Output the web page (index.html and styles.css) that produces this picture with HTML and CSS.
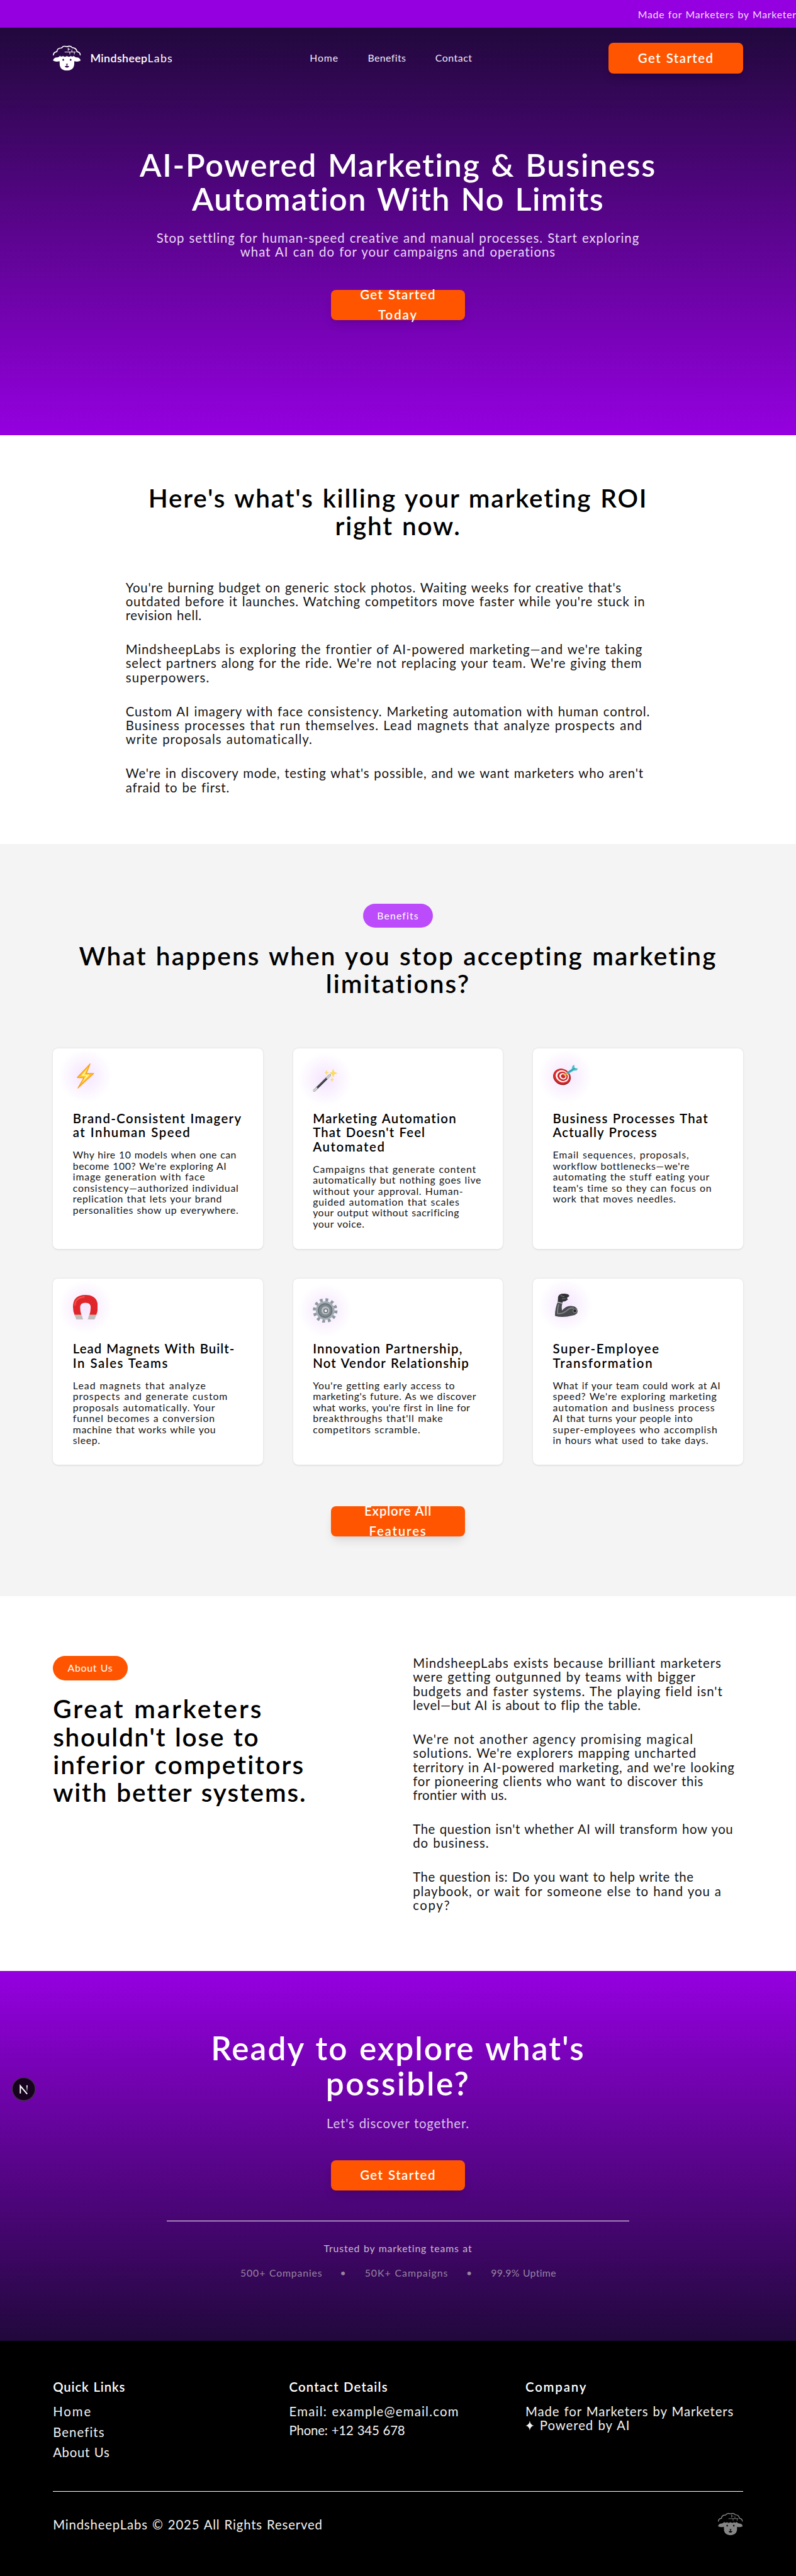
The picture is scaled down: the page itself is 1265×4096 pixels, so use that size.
FILE: index.html
```
<!DOCTYPE html>
<html lang="en">
<head>
<meta charset="utf-8">
<title>MindsheepLabs</title>
<link rel="stylesheet" href="styles.css">
</head>
<body>
<svg class="defs" width="0" height="0" aria-hidden="true">
  <symbol id="sheep" viewBox="0 0 135 124">
    <g fill="none" stroke="currentColor" stroke-width="5" stroke-linecap="round" stroke-linejoin="round">
      <path d="M2 47Q3 33 19 31Q20 13 42 13Q50 0 68 7Q86 0 94 12Q113 12 117 31Q132 34 133 47"/>
      <path stroke-width="3" d="M58 33H109M74 13V26M74 19H82M92 22V32M82 33V43M104 33V43"/>
    </g>
    <path fill="currentColor" fill-rule="evenodd" d="M0 74Q5 58 22 59Q29 57 34 51Q40 59 49 52Q57 60 68 52Q78 60 87 52Q95 59 101 51Q107 57 113 59Q130 58 135 74Q120 83 104 77L103 98Q97 123 68 123Q38 123 33 98L32 77Q14 83 0 74ZM50 66a4 5 0 1 0 .1 0ZM86 66a4 5 0 1 0 .1 0ZM62 90L66 94V101H57Q60 109 68 109Q76 109 79 101H70V94L74 90Z"/>
  </symbol>
</svg>

<div class="marquee"><span class="l" style="--t:49">Made for Marketers by Marketers</span></div>

<section class="hero">
  <header class="nav wrap">
    <a class="brand"><svg class="brand-icon"><use href="#sheep"/></svg><span><b>Mindsheep</b>Labs</span></a>
    <nav class="nav-links"><a style="--t:60">Home</a><a style="--t:28">Benefits</a><a style="--t:35">Contact</a></nav>
    <a class="btn"><span class="l" style="--t:73">Get Started</span></a>
  </header>
  <h1 class="h-xl">
    <span class="l" style="--t:34">AI-Powered Marketing &amp; Business</span>
    <span class="l" style="--t:28">Automation With No Limits</span>
  </h1>
  <p class="lead">
    <span class="l" style="--t:47">Stop settling for human-speed creative and manual processes. Start exploring</span>
    <span class="l" style="--t:49">what AI can do for your campaigns and operations</span>
  </p>
  <a class="btn"><span class="l" style="--t:73">Get Started</span><span class="l" style="--t:95">Today</span></a>
</section>

<section class="problem">
  <h2 class="h-lg center">
    <span class="l" style="--t:45">Here's what's killing your marketing ROI</span>
    <span class="l" style="--t:45">right now.</span>
  </h2>
  <div class="prose problem-text">
    <p>
      <span class="l" style="--t:38">You're burning budget on generic stock photos. Waiting weeks for creative that's</span>
      <span class="l" style="--t:39">outdated before it launches. Watching competitors move faster while you're stuck in</span>
      <span class="l" style="--t:31">revision hell.</span>
    </p>
    <p>
      <span class="l" style="--t:43">MindsheepLabs is exploring the frontier of AI-powered marketing—and we're taking</span>
      <span class="l" style="--t:40">select partners along for the ride. We're not replacing your team. We're giving them</span>
      <span class="l" style="--t:56">superpowers.</span>
    </p>
    <p>
      <span class="l" style="--t:41">Custom AI imagery with face consistency. Marketing automation with human control.</span>
      <span class="l" style="--t:52">Business processes that run themselves. Lead magnets that analyze prospects and</span>
      <span class="l" style="--t:49">write proposals automatically.</span>
    </p>
    <p>
      <span class="l" style="--t:39">We're in discovery mode, testing what's possible, and we want marketers who aren't</span>
      <span class="l" style="--t:38">afraid to be first.</span>
    </p>
  </div>
</section>

<section class="benefits">
  <span class="pill" style="--t:73">Benefits</span>
  <h2 class="h-lg center">
    <span class="l" style="--t:53">What happens when you stop accepting marketing</span>
    <span class="l" style="--t:51">limitations?</span>
  </h2>
  <div class="cards">
    <article class="card">
      <div class="icon float-high"><svg viewBox="0 0 40 40"><path d="M27.5 .5L7 22.5L17.5 23L8 39.5L33.3 16L21.5 16Z" fill="#fdc224" stroke="#f79a1e" stroke-width="1.3" stroke-linejoin="round"/><path d="M24 7L13 20L21 20L14 31L27 18L18 18Z" fill="#fff59a"/></svg></div>
      <h3>
        <span class="l" style="--t:68">Brand-Consistent Imagery</span>
        <span class="l" style="--t:73">at Inhuman Speed</span>
      </h3>
      <p>
        <span class="l" style="--t:32">Why hire 10 models when one can</span>
        <span class="l" style="--t:35">become 100? We're exploring AI</span>
        <span class="l" style="--t:52">image generation with face</span>
        <span class="l" style="--t:48">consistency—authorized individual</span>
        <span class="l" style="--t:44">replication that lets your brand</span>
        <span class="l" style="--t:42">personalities show up everywhere.</span>
      </p>
    </article>
    <article class="card">
      <div class="icon float-low"><svg viewBox="0 0 40 40"><path d="M2.5 37.5L27.5 13" stroke="#33363b" stroke-width="3.6" stroke-linecap="round"/><path d="M3 36L26 13.5" stroke="#73777c" stroke-width=".9"/><path d="M2.5 37.5L6 34M23.5 17L27.5 13" stroke="#d0cfcb" stroke-width="3.4" stroke-linecap="round"/><g fill="#fbdd5c"><path d="M33 2L34.6 7.4L40 9.5L34.6 11.6L33 17L31 11.6L26.5 9.5L31 7.4Z"/><path d="M22 4L23 7.5L26 8.5L23 9.5L22 13L21 9.5L19 8.5L21 7.5ZM31 16L32 19L34.5 20L32 21L31 24L30 21L28 20L30 19Z"/></g></svg></div>
      <h3>
        <span class="l" style="--t:61">Marketing Automation</span>
        <span class="l" style="--t:56">That Doesn't Feel</span>
        <span class="l" style="--t:80">Automated</span>
      </h3>
      <p>
        <span class="l" style="--t:56">Campaigns that generate content</span>
        <span class="l" style="--t:44">automatically but nothing goes live</span>
        <span class="l" style="--t:45">without your approval. Human-</span>
        <span class="l" style="--t:52">guided automation that scales</span>
        <span class="l" style="--t:35">your output without sacrificing</span>
        <span class="l" style="--t:38">your voice.</span>
      </p>
    </article>
    <article class="card">
      <div class="icon float-mid"><svg viewBox="0 0 40 40"><g transform="rotate(25 14 20)"><ellipse cx="14.5" cy="20.5" rx="14.5" ry="12.5" fill="#8d1d20"/><ellipse cx="14" cy="19.5" rx="14" ry="12" fill="#d92b2b"/><ellipse cx="14.5" cy="19.3" rx="11" ry="9.4" fill="#fff"/><ellipse cx="15" cy="19" rx="8.6" ry="7.4" fill="#cf2528"/><ellipse cx="15.4" cy="18.8" rx="5.8" ry="5" fill="#fff"/><ellipse cx="15.8" cy="18.6" rx="3.7" ry="3.2" fill="#cf2528"/></g><path d="M18 18.5L24 13.5" stroke="#e4b32f" stroke-width="2.6"/><path d="M22 13L30 7.5L31 3L34 1L34.5 6L40 7L38 10L33 10.5L24.5 15.5Q21 16 22 13Z" fill="#4dbfcb"/><path d="M23 14L35 6.5" stroke="#247d8c"/></svg></div>
      <h3>
        <span class="l" style="--t:59">Business Processes That</span>
        <span class="l" style="--t:57">Actually Process</span>
      </h3>
      <p>
        <span class="l" style="--t:56">Email sequences, proposals,</span>
        <span class="l" style="--t:42">workflow bottlenecks—we're</span>
        <span class="l" style="--t:46">automating the stuff eating your</span>
        <span class="l" style="--t:45">team's time so they can focus on</span>
        <span class="l" style="--t:45">work that moves needles.</span>
      </p>
    </article>
    <article class="card">
      <div class="icon float-mid"><svg viewBox="0 0 40 40"><path d="M2.5 32Q0 26 0 19.5Q0 0 20 0Q40 0 40 19.5Q40 26 37.5 32L26.5 32Q28.5 26 28.5 20Q28.5 12.5 20 12.5Q11.5 12.5 11.5 20Q11.5 26 13.5 32Z" fill="#e0262b"/><path d="M3 17Q4 4 19 3" fill="none" stroke="#ef5750" stroke-width="2"/><path d="M2.5 32H14L16.5 40H5.5ZM26 32H37.5L34.5 40H23.5Z" fill="#c2bfbb"/></svg></div>
      <h3>
        <span class="l" style="--t:50">Lead Magnets With Built-</span>
        <span class="l" style="--t:74">In Sales Teams</span>
      </h3>
      <p>
        <span class="l" style="--t:68">Lead magnets that analyze</span>
        <span class="l" style="--t:60">prospects and generate custom</span>
        <span class="l" style="--t:52">proposals automatically. Your</span>
        <span class="l" style="--t:53">funnel becomes a conversion</span>
        <span class="l" style="--t:42">machine that works while you</span>
        <span class="l" style="--t:44">sleep.</span>
      </p>
    </article>
    <article class="card">
      <div class="icon float-low"><svg viewBox="0 0 40 40"><circle cx="20" cy="20" r="17.3" fill="none" stroke="#8d979e" stroke-width="5" stroke-dasharray="4.4 4.657"/><circle cx="20" cy="20" r="15" fill="#a3adb3"/><circle cx="20" cy="20" r="11" fill="#7e888f" stroke="#646d74" stroke-width="1.5"/><circle cx="20.5" cy="20" r="6.5" fill="#b9c1c5"/><circle cx="21" cy="20.5" r="3" fill="#f2eef6" stroke="#646d74" stroke-width="1.5"/></svg></div>
      <h3>
        <span class="l" style="--t:60">Innovation Partnership,</span>
        <span class="l" style="--t:60">Not Vendor Relationship</span>
      </h3>
      <p>
        <span class="l" style="--t:48">You're getting early access to</span>
        <span class="l" style="--t:38">marketing's future. As we discover</span>
        <span class="l" style="--t:25">what works, you're first in line for</span>
        <span class="l" style="--t:54">breakthroughs that'll make</span>
        <span class="l" style="--t:54">competitors scramble.</span>
      </p>
    </article>
    <article class="card">
      <div class="icon float-top"><svg viewBox="0 0 40 40"><path d="M3 36Q3 24 7.5 14L15 16Q13 22 14.5 28Q22 19 31 21Q39 22 39.5 29Q39 35 31 36Q16 40 4 37Z" fill="#4a4b4e"/><path d="M8 6Q10 0 19 1Q26 1.5 26 5L22 8L24 10Q20 14 15.5 13.5L15 16L7.5 14Z" fill="#333437"/><path d="M7.5 14.5L15 16.5" stroke="#bdbdbf" stroke-width="1.5"/><path d="M9 18Q6.5 26 7 33Q15 34 22 28Q27 23 33 24" fill="none" stroke="#7e8083" stroke-width="2"/><circle cx="35" cy="28.5" r="3" fill="#242527" stroke="#aaa"/><path d="M12 4L18 6M14 9L20 9" stroke="#85868a"/></svg></div>
      <h3>
        <span class="l" style="--t:80">Super-Employee</span>
        <span class="l" style="--t:82">Transformation</span>
      </h3>
      <p>
        <span class="l" style="--t:36">What if your team could work at AI</span>
        <span class="l" style="--t:49">speed? We're exploring marketing</span>
        <span class="l" style="--t:55">automation and business process</span>
        <span class="l" style="--t:31">AI that turns your people into</span>
        <span class="l" style="--t:59">super-employees who accomplish</span>
        <span class="l" style="--t:41">in hours what used to take days.</span>
      </p>
    </article>
  </div>
  <a class="btn"><span class="l" style="--t:43">Explore All</span><span class="l" style="--t:92">Features</span></a>
</section>

<section class="about">
  <div class="about-grid wrap">
    <div>
      <span class="pill pill-orange" style="--t:48">About Us</span>
      <h2 class="h-lg">
        <span class="l" style="--t:71">Great marketers</span>
        <span class="l" style="--t:43">shouldn't lose to</span>
        <span class="l" style="--t:53">inferior competitors</span>
        <span class="l" style="--t:46">with better systems.</span>
      </h2>
    </div>
    <div class="prose">
      <p>
        <span class="l" style="--t:48">MindsheepLabs exists because brilliant marketers</span>
        <span class="l" style="--t:45">were getting outgunned by teams with bigger</span>
        <span class="l" style="--t:44">budgets and faster systems. The playing field isn't</span>
        <span class="l" style="--t:27">level—but AI is about to flip the table.</span>
      </p>
      <p>
        <span class="l" style="--t:55">We're not another agency promising magical</span>
        <span class="l" style="--t:44">solutions. We're explorers mapping uncharted</span>
        <span class="l" style="--t:38">territory in AI-powered marketing, and we're looking</span>
        <span class="l" style="--t:34">for pioneering clients who want to discover this</span>
        <span class="l" style="--t:19">frontier with us.</span>
      </p>
      <p>
        <span class="l" style="--t:29">The question isn't whether AI will transform how you</span>
        <span class="l" style="--t:46">do business.</span>
      </p>
      <p>
        <span class="l" style="--t:26">The question is: Do you want to help write the</span>
        <span class="l" style="--t:46">playbook, or wait for someone else to hand you a</span>
        <span class="l" style="--t:80">copy?</span>
      </p>
    </div>
  </div>
</section>

<section class="cta">
  <h2 class="h-xl">
    <span class="l" style="--t:40">Ready to explore what's</span>
    <span class="l" style="--t:50">possible?</span>
  </h2>
  <p class="lead"><span class="l" style="--t:40">Let's discover together.</span></p>
  <a class="btn"><span class="l" style="--t:73">Get Started</span></a>
  <div class="trust">
    <p><span class="l" style="--t:53">Trusted by marketing teams at</span></p>
    <div class="stats">
      <span class="l" style="--t:55">500+ Companies</span><i>•</i>
      <span class="l" style="--t:64">50K+ Campaigns</span><i>•</i>
      <span class="l" style="--t:21">99.9% Uptime</span>
    </div>
  </div>
</section>

<footer class="footer">
  <div class="wrap">
    <div class="footer-cols">
      <div class="col-links">
        <h4 style="--t:42">Quick Links</h4>
        <a style="--t:95">Home</a><a style="--t:53">Benefits</a><a style="--t:34">About Us</a>
      </div>
      <div class="col-contact">
        <h4 style="--t:57">Contact Details</h4>
        <p class="l" style="--t:60">Email: example@email.com</p>
        <p class="l" style="--t:-9">Phone: +12 345 678</p>
      </div>
      <div>
        <h4 style="--t:90">Company</h4>
        <p class="l" style="--t:44">Made for Marketers by Marketers</p>
        <p class="powered"><svg viewBox="0 0 14 18"><path d="M7 1Q7.8 8 13.5 9Q7.8 10 7 17Q6.2 10 .5 9Q6.2 8 7 1Z" fill="currentColor"/></svg><span class="l" style="--t:47">Powered by AI</span></p>
      </div>
    </div>
    <div class="footer-bar">
      <span class="l" style="--t:41">MindsheepLabs © 2025 All Rights Reserved</span>
      <svg class="footer-icon"><use href="#sheep"/></svg>
    </div>
  </div>
</footer>

<div class="dev-badge"><svg viewBox="0 0 40 40"><defs><linearGradient id="fade" x1="0" y1="0" x2="0" y2="1"><stop offset="0" stop-color="#fff"/><stop offset="1" stop-color="#fff" stop-opacity="0"/></linearGradient></defs><circle cx="20" cy="20" r="18.5" fill="#170320" stroke="#433048" stroke-width="1.5"/><path d="M14.5 27V15L25.5 28" fill="none" stroke="#fff" stroke-width="2"/><path d="M24.2 14h2v11h-2z" fill="url(#fade)"/></svg></div>
</body>
</html>
```
FILE: styles.css
```
* { box-sizing: border-box; margin: 0; padding: 0; }

html { background: #000; }

body {
  position: relative;
  zoom: 0.988;
  overflow: hidden;
  background: #fff;
  color: #000;
  font-family: Lato, "Open Sans", sans-serif;
  font-size: 20.6px;
  line-height: 22.6px;
}

/* Tracking, in thousandths of an em */
[style*="--t"] { letter-spacing: calc(var(--t) * 0.001em); word-spacing: 0.05em; }

.defs { position: absolute; }
.wrap { width: 1110px; margin: 0 auto; }
.l { display: block; white-space: nowrap; }

.marquee {
  height: 45px;
  padding: 12px 0 0 1026px;
  overflow: hidden;
  background: #9500e0;
  color: #f0dcfb;
  font-size: 16px;
}

.h-xl, .h-lg, h3, h4 { font-weight: 600; }
.h-xl, .lead { text-align: center; color: #fff; }
.h-lg { font-size: 41px; line-height: 44.9px; }
.center { text-align: center; }
.hero .lead { color: #ead9f5; }

.btn {
  display: flex;
  flex-direction: column;
  justify-content: center;
  align-items: center;
  width: 216px;
  height: 49px;
  border-radius: 8px;
  background: #ff5500;
  box-shadow: 0 10px 15px -3px rgba(0, 0, 0, .1), 0 4px 6px -4px rgba(0, 0, 0, .1);
  color: #fff;
  font-weight: 600;
  line-height: 32px;
}
.btn span { flex: none; }

.hero {
  height: 655px;
  padding-top: 24px;
  background: linear-gradient(#21083c, #9500e0);
}
.hero > .btn { margin: 50px auto 0; }
.hero .h-xl { margin: 120px 0 24px; font-size: 51px; line-height: 54.6px; }

.nav { display: grid; grid-template-columns: 413px 1fr 216px; align-items: center; color: #fff; }
.brand { display: flex; align-items: center; gap: 15px; font-size: 18px; letter-spacing: 0.07em; }
.brand b { font-weight: 600; letter-spacing: 0.022em; }
.brand-icon { width: 45px; height: 41px; }
.nav-links { display: flex; gap: 47px; font-size: 16px; color: #f3ebf7; }

.problem { height: 658px; padding-top: 79px; }
.prose { display: flex; flex-direction: column; gap: 32px; color: #141414; }
.problem-text { width: 876px; margin: 65px auto 0; }

.benefits { height: 1211px; padding-top: 96px; background: #f4f4f4; text-align: center; }
.pill {
  display: inline-flex;
  align-items: center;
  justify-content: center;
  width: 112px;
  height: 39px;
  border-radius: 20px;
  background: #bb4bfb;
  color: #fff;
  font-size: 16px;
  vertical-align: top;
}
.pill-orange { width: 120px; background: #ff5500; }
.benefits .h-lg { margin-top: 23px; }
.benefits > .btn { margin: 66px auto 0; }

.cards {
  display: grid;
  grid-template-columns: repeat(3, 338px);
  grid-template-rows: 323px 300px;
  gap: 48px;
  justify-content: center;
  margin-top: 81px;
  text-align: left;
}
.card {
  padding: 32px;
  border-radius: 8px;
  background: #fff;
  box-shadow: 0 1px 3px rgba(0, 0, 0, .12);
}
.card h3 { font-size: 20.6px; line-height: 22.6px; margin: 29.7px 0 16px; }
.card p { font-size: 16px; line-height: 17.65px; color: #141414; }
.icon { position: relative; width: 40px; height: 40px; }
.icon::before {
  content: "";
  position: absolute;
  inset: -24px;
  background: radial-gradient(circle, rgba(187, 75, 251, .15), rgba(187, 75, 251, .04) 50%, transparent 70%);
}
.icon svg { position: relative; display: block; width: 40px; height: 40px; }
.float-top { transform: translateY(-9px); }
.float-high { transform: translateY(-7px); }
.float-mid { transform: translateY(-6px); }
.float-low { transform: translateY(-1px); }

.about { height: 603px; padding-top: 96px; }
.about-grid { display: grid; grid-template-columns: 579px 1fr; }
.about .h-lg { margin-top: 24px; }

.cta {
  height: 595px;
  padding-top: 95px;
  background: linear-gradient(#9500e0, #21083c);
}
.cta .h-xl { font-size: 52px; line-height: 57px; margin-bottom: 25px; }
.cta .lead { color: #d9c3e8; }
.cta .btn { margin: 48px auto; }
.trust {
  width: 744px;
  margin: 0 auto;
  padding-top: 35px;
  border-top: 1px solid #fff;
  font-size: 16px;
  line-height: 17.6px;
  text-align: center;
  color: #cabcd3;
}
.stats {
  display: grid;
  grid-template-columns: 130px 70px 133px 70px 104px;
  justify-content: center;
  margin-top: 22px;
  color: #9685a1;
}
.stats i { font-style: normal; }

.footer { height: 379px; padding-top: 63px; background: #000; color: #f2f2f2; }
.footer-cols { display: grid; grid-template-columns: 380px 380px 1fr; height: 179px; }
.footer h4 { color: #fff; font-size: 20.6px; margin-bottom: 17px; }
.col-links { display: flex; flex-direction: column; }
.col-links a { margin-bottom: 10.5px; }
.col-contact p { margin-bottom: 7.4px; }
.powered { display: flex; align-items: center; gap: 9px; }
.powered svg { width: 14px; height: 18px; }
.footer-bar {
  display: flex;
  justify-content: space-between;
  align-items: center;
  padding-top: 34px;
  border-top: 1px solid #fff;
}
.footer-icon { width: 40px; height: 37px; color: #858585; }

.dev-badge { position: absolute; left: 18px; top: 3342px; width: 40px; height: 40px; }
.dev-badge svg { display: block; }
```
